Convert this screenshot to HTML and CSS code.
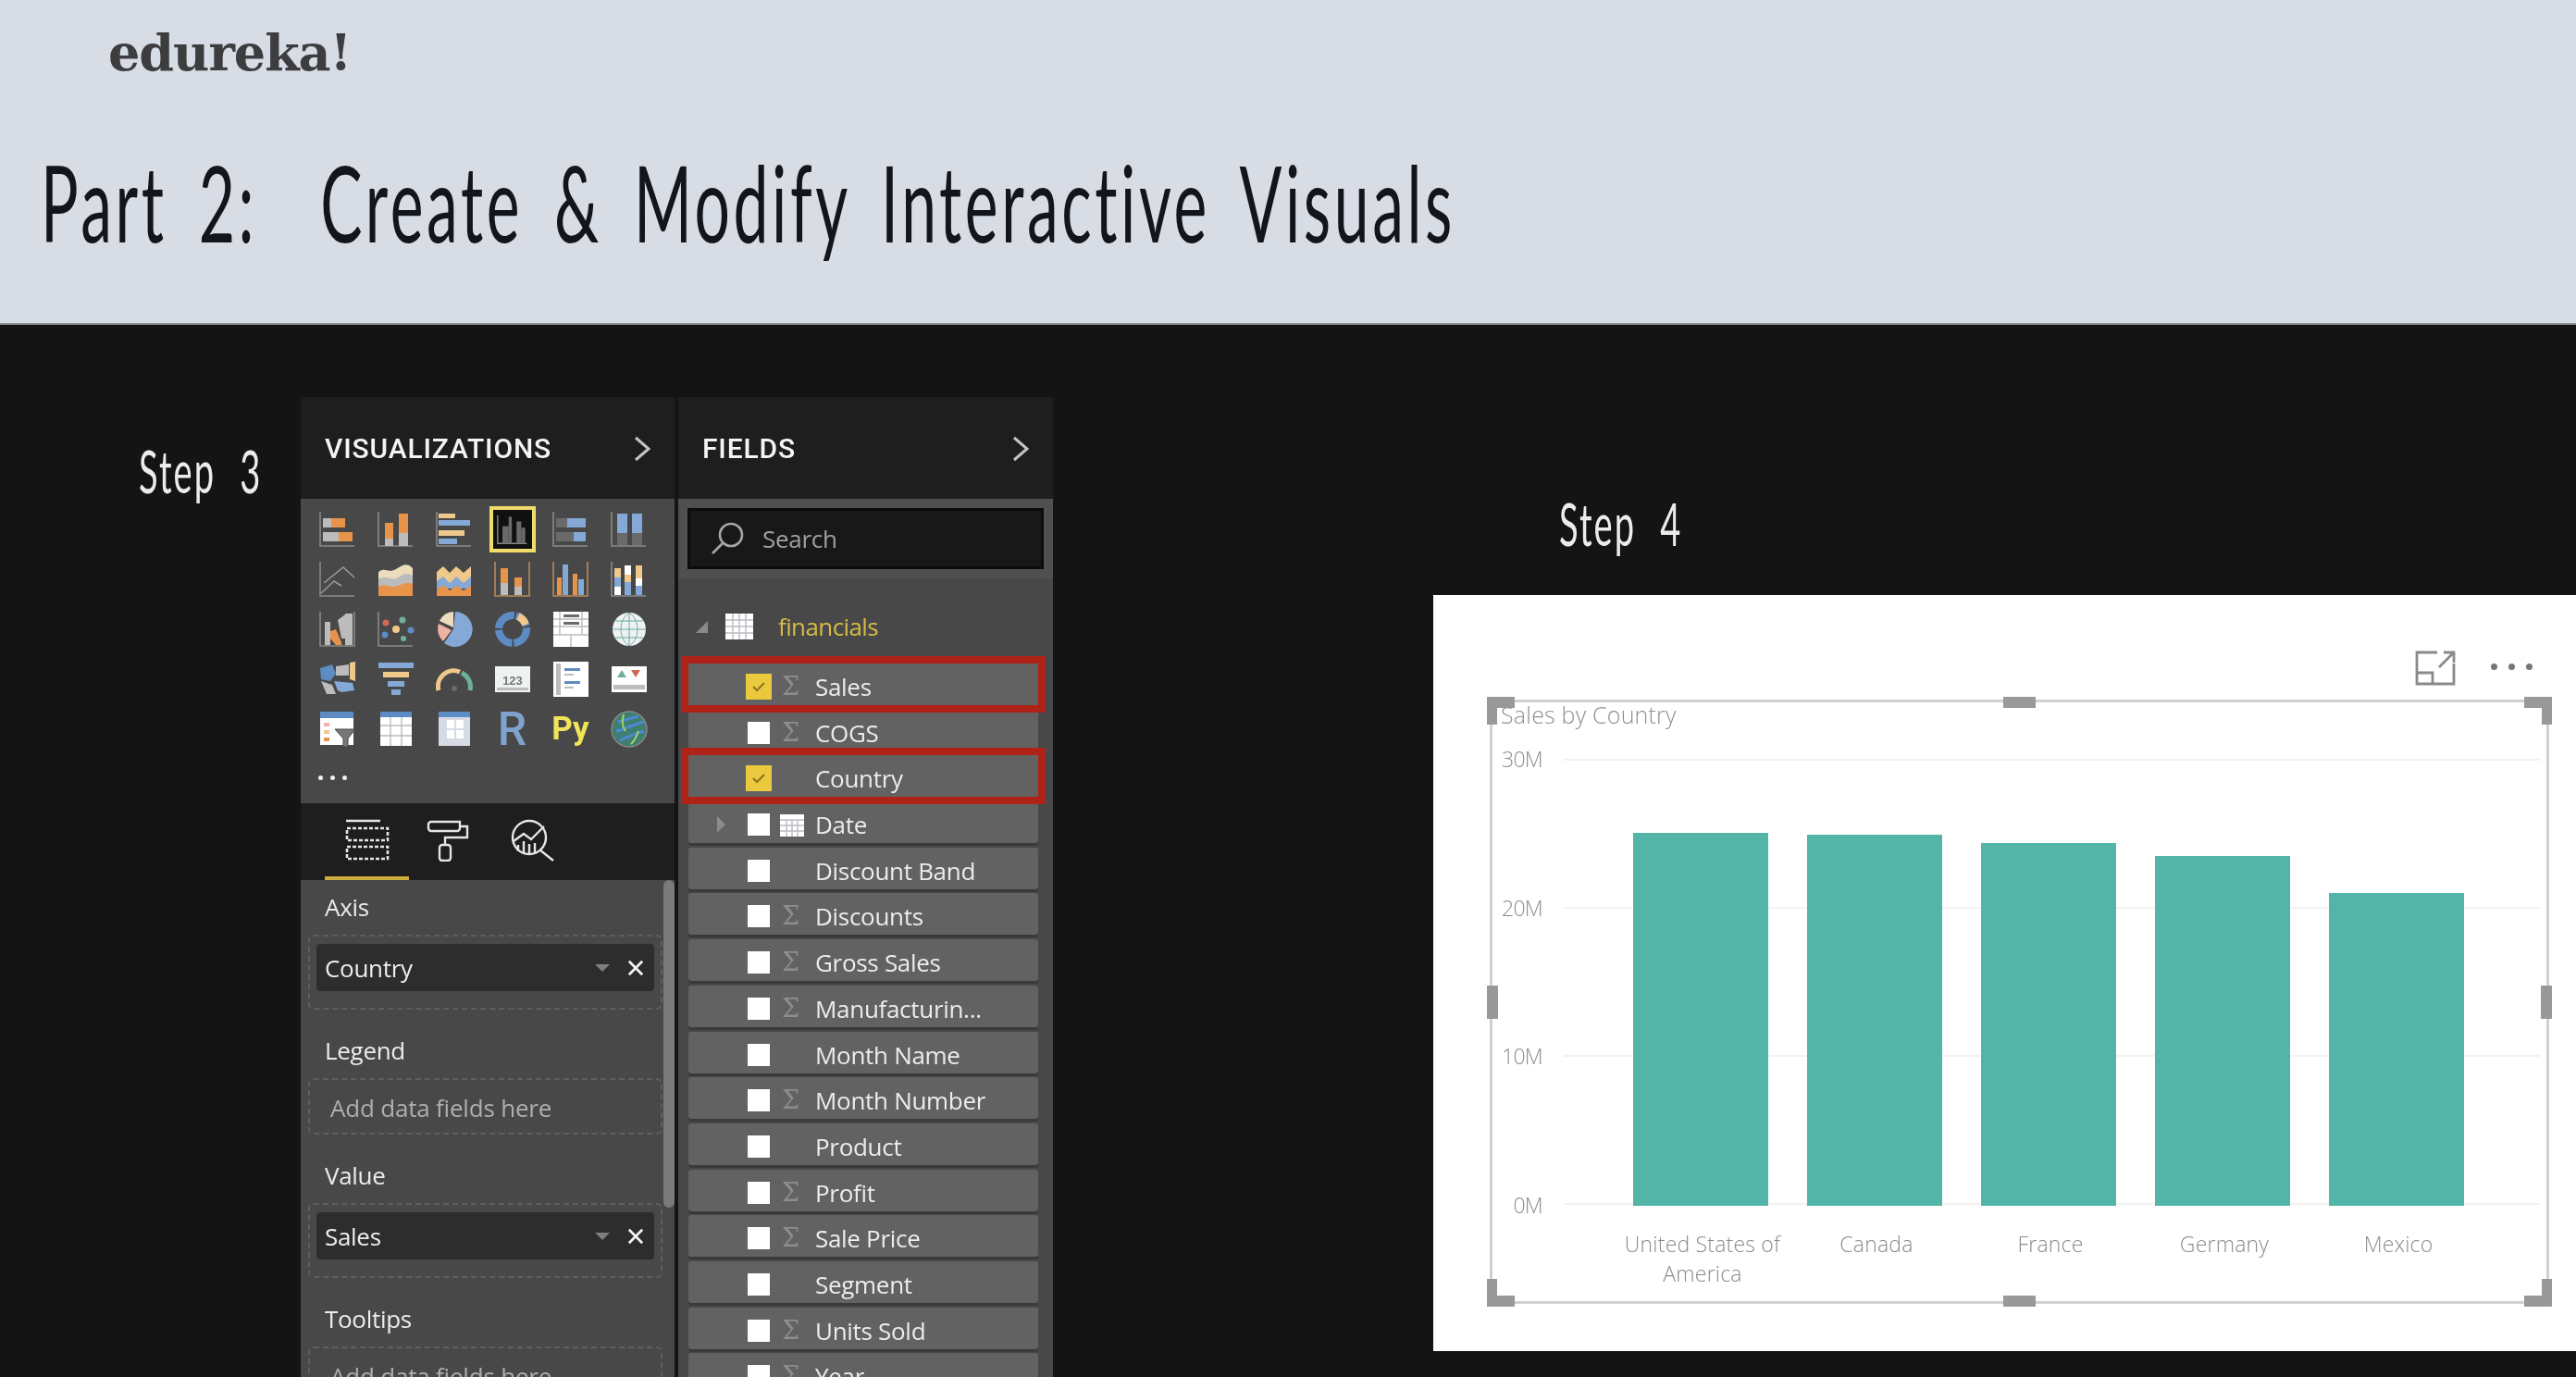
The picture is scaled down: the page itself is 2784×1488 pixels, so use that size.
FILE: index.html
```html
<!DOCTYPE html>
<html lang="en">
<head>
<meta charset="utf-8">
<title>Part 2: Create &amp; Modify Interactive Visuals</title>
<link rel="stylesheet" href="styles.css">
</head>
<body>
<div class="shot">
<header class="banner">
  <div class="brand">edureka!</div>
  <h1 class="title"><span class="squeeze">Part 2:  Create &amp; Modify Interactive Visuals</span></h1>
</header>
<main class="stage">
  <div class="step step-three"><span class="squeeze">Step 3</span></div>
  <section class="panel viz">
    <div class="panel-head"><span>VISUALIZATIONS</span><svg class="chev" viewBox="0 0 18 28"><path d="M2 2L16 14L2 26"/></svg></div>
    <div class="gallery">
      <svg class="vi" viewBox="0 0 40 40"><path class="ax" d="M1 1V38H38"/><rect class="g" x="4" y="8" width="9" height="10"/><rect class="o" x="13" y="8" width="15" height="10"/><rect class="g" x="4" y="23" width="17" height="10"/><rect class="o" x="21" y="23" width="15" height="10"/></svg>
      <svg class="vi" viewBox="0 0 40 40"><path class="ax" d="M1 1V38H38"/><rect class="g" x="8" y="30" width="9" height="8"/><rect class="o" x="8" y="13" width="9" height="17"/><rect class="g" x="23" y="24" width="10" height="14"/><rect class="o" x="23" y="3" width="10" height="21"/></svg>
      <svg class="vi" viewBox="0 0 40 40"><path class="ax" d="M1 1V38H38"/><rect class="t" x="3" y="3" width="18" height="5"/><rect class="b" x="3" y="10" width="34" height="6"/><rect class="t" x="3" y="21" width="28" height="6"/><rect class="b" x="3" y="30" width="20" height="6"/></svg>
      <div class="vi-selected"><svg class="vi-small" viewBox="0 0 40 40"><path class="ax" d="M1 2V38H38"/><rect class="dk" x="7" y="16" width="8" height="22"/><rect class="dk" x="15" y="4" width="4" height="34"/><rect class="dk" x="25" y="10" width="6" height="28"/><rect class="dk" x="31" y="18" width="5" height="20"/></svg></div>
      <svg class="vi" viewBox="0 0 40 40"><path class="ax" d="M1 1V38H38"/><rect class="dk" x="4" y="8" width="12" height="10"/><rect class="b" x="16" y="8" width="20" height="10"/><rect class="dk" x="4" y="23" width="19" height="10"/><rect class="b" x="23" y="23" width="13" height="10"/></svg>
      <svg class="vi" viewBox="0 0 40 40"><path class="ax" d="M1 1V38H38"/><rect class="b" x="7" y="3" width="11" height="21"/><rect class="dk" x="7" y="24" width="11" height="13"/><rect class="b" x="23" y="3" width="11" height="21"/><rect class="dk" x="23" y="24" width="11" height="13"/></svg>

      <svg class="vi" viewBox="0 0 40 40"><path class="ax" d="M1 1V38H38"/><path class="ln" d="M2 35L16 22L24 27M5 24L26 7L38 18"/></svg>
      <svg class="vi" viewBox="0 0 40 40"><path class="pale" d="M1 12C8 6 12 14 20 9S32 2 38 8V38H1Z"/><path class="g" d="M1 20C10 14 14 23 22 18S32 13 38 16V38H1Z"/><path class="o" d="M1 28C10 24 14 30 22 27S32 23 38 25V38H1Z"/></svg>
      <svg class="vi" viewBox="0 0 40 40"><path class="t" d="M1 12L8 6L15 13L22 6L30 13L38 6V24H1Z"/><path class="b" d="M1 22L8 17L15 24L22 17L30 24L38 17V30H1Z"/><path class="o" d="M1 31L8 26L15 32L22 27L30 32L38 27V38H1Z"/></svg>
      <svg class="vi" viewBox="0 0 40 40"><path class="axo" d="M1 1V38H38V1"/><rect class="o" x="7" y="8" width="8" height="16"/><rect class="g" x="7" y="24" width="8" height="13"/><rect class="o" x="22" y="18" width="8" height="10"/><rect class="g" x="22" y="28" width="8" height="9"/></svg>
      <svg class="vi" viewBox="0 0 40 40"><path class="axo" d="M1 1V38H38V1"/><rect class="o" x="5" y="18" width="5" height="19"/><rect class="b" x="11" y="4" width="6" height="33"/><rect class="o" x="22" y="14" width="5" height="23"/><rect class="b" x="28" y="20" width="6" height="17"/></svg>
      <svg class="vi" viewBox="0 0 40 40"><path class="ax" d="M1 1V38H38"/><rect class="t" x="4" y="8" width="7" height="10"/><rect class="b" x="4" y="18" width="7" height="10"/><rect class="w" x="4" y="28" width="7" height="9"/><rect class="w" x="15" y="5" width="7" height="10"/><rect class="t" x="15" y="15" width="7" height="8"/><rect class="b" x="15" y="23" width="7" height="14"/><rect class="t" x="27" y="5" width="7" height="14"/><rect class="w" x="27" y="19" width="7" height="8"/><rect class="b" x="27" y="27" width="7" height="10"/></svg>

      <svg class="vi" viewBox="0 0 40 40"><path class="ax" d="M1 1V38H38V1"/><rect class="g" x="6" y="12" width="6" height="25"/><rect class="g" x="28" y="3" width="8" height="34"/><path class="o" d="M12 22L18 20L24 34V37H18L12 30Z"/><path class="g" d="M20 10L28 4V30L24 30Z"/></svg>
      <svg class="vi" viewBox="0 0 40 40"><path class="ax" d="M1 1V38H38"/><circle class="rd" cx="9" cy="13" r="3.5"/><circle class="gn" cx="27" cy="10" r="3.5"/><circle class="t" cx="20" cy="20" r="4"/><circle class="bd" cx="8" cy="26" r="3.5"/><circle class="bd" cx="36" cy="21" r="3.5"/><circle class="gn" cx="28" cy="30" r="3"/></svg>
      <svg class="vi" viewBox="0 0 40 40"><path class="b" d="M21 1A19 19 0 1 1 9 35L19 20Z"/><path class="pale" d="M19 1V18L4 11A18 18 0 0 1 19 1Z"/><path class="pk" d="M3 14L17 21L8 33A18 18 0 0 1 3 14Z"/></svg>
      <svg class="vi" viewBox="0 0 40 40"><circle class="ring" cx="20" cy="20" r="15" stroke-dasharray="22 2 22 2 24 2 16 2"/><path class="tring" d="M26 6A15 15 0 0 1 34 15"/></svg>
      <svg class="vi" viewBox="0 0 40 40"><rect class="w" x="1" y="1" width="38" height="38"/><path class="tb" d="M1 26H39M20 26V39M1 9H39M1 17H39M8 1V26M32 1V26"/><rect class="dk" x="12" y="4" width="17" height="3"/><rect class="dk" x="12" y="12" width="17" height="3"/></svg>
      <svg class="vi" viewBox="0 0 40 40"><circle class="pw" cx="20" cy="20" r="18"/><path class="gl" d="M2 20H38M5 11H35M5 29H35M20 2V38M20 2C8 10 8 30 20 38M20 2C32 10 32 30 20 38"/></svg>

      <svg class="vi" viewBox="0 0 40 40"><path class="bd" d="M1 8L14 4L18 14L12 22L2 20Z"/><path class="g" d="M18 6L32 4L32 16L18 16Z"/><path class="t" d="M33 2L39 1V22L33 20Z"/><path class="g" d="M2 22L14 26L18 36L8 36Z"/><path class="b" d="M16 22L36 24L38 32L24 34L20 32Z"/></svg>
      <svg class="vi" viewBox="0 0 40 40"><rect class="b" x="1" y="2" width="38" height="6"/><rect class="t" x="6" y="12" width="28" height="6"/><rect class="b" x="11" y="22" width="18" height="6"/><rect class="b" x="15" y="31" width="10" height="6"/></svg>
      <svg class="vi" viewBox="0 0 40 40"><path class="gt" d="M3 32A17 17 0 0 1 26 12"/><path class="gg" d="M28 13A17 17 0 0 1 37 32"/><circle class="dk" cx="20" cy="30" r="3"/></svg>
      <svg class="vi" viewBox="0 0 40 40"><rect class="pw" x="1" y="6" width="38" height="28"/><text class="num" x="20" y="26">123</text><rect class="g" x="3" y="29" width="34" height="3"/></svg>
      <svg class="vi" viewBox="0 0 40 40"><rect class="w" x="1" y="1" width="38" height="38"/><rect class="g" x="4" y="3" width="5" height="34"/><rect class="bd" x="13" y="8" width="17" height="3"/><rect class="g" x="13" y="14" width="10" height="2"/><rect class="bd" x="13" y="22" width="17" height="3"/><rect class="g" x="13" y="28" width="10" height="2"/></svg>
      <svg class="vi" viewBox="0 0 40 40"><rect class="w" x="1" y="6" width="38" height="28"/><path class="gn" d="M12 10L17 18H7Z"/><path class="rd" d="M22 10H32L27 18Z"/><rect class="g" x="3" y="26" width="34" height="5"/></svg>

      <svg class="vi" viewBox="0 0 40 40"><rect class="w" x="1" y="1" width="36" height="36"/><rect class="bd" x="1" y="1" width="36" height="7"/><rect class="pk" x="5" y="13" width="6" height="4"/><rect class="t" x="5" y="21" width="6" height="4"/><rect class="o" x="5" y="29" width="6" height="4"/><path class="fn" d="M17 20H39L31 30V39H26V30Z"/></svg>
      <svg class="vi" viewBox="0 0 40 40"><rect class="w" x="3" y="1" width="34" height="37"/><rect class="bd" x="3" y="1" width="34" height="6"/><path class="tb" d="M3 16H37M3 27H37M14 7V38M26 7V38"/></svg>
      <svg class="vi" viewBox="0 0 40 40"><rect class="pl" x="3" y="1" width="34" height="37"/><rect class="bd" x="3" y="1" width="34" height="6"/><rect class="w" x="12" y="10" width="8" height="9"/><rect class="w" x="22" y="10" width="8" height="9"/><rect class="w" x="12" y="21" width="8" height="9"/><rect class="w" x="22" y="21" width="8" height="9"/></svg>
      <span class="vi-r">R</span>
      <span class="vi-py">Py</span>
      <svg class="vi" viewBox="0 0 40 40"><circle class="gb" cx="20" cy="20" r="19"/><path class="bs" d="M8 12C16 10 22 8 30 6M6 22C16 20 26 14 36 12M10 32C20 28 28 24 36 22"/><path class="gs" d="M14 4C12 12 12 16 16 22M30 22C28 28 26 32 22 36"/></svg>
      <div class="more"><i></i><i></i><i></i></div>
    </div>
    <div class="tabs">
      <div class="tab tab-active"><svg class="tab-icon" viewBox="0 0 48 46"><path class="tabl" d="M1 2H38"/><rect class="tabd" x="2" y="10" width="44" height="13"/><rect class="tabd" x="2" y="30" width="44" height="13"/></svg></div>
      <div class="tab"><svg class="tab-icon" viewBox="0 0 46 46"><path class="tabl" d="M36 8H44V20H20V28M36 3H5A3 3 0 0 0 2 6V10A3 3 0 0 0 5 13H33A3 3 0 0 0 36 10Z"/><rect class="tabl" x="14" y="28" width="12" height="17" rx="3"/></svg></div>
      <div class="tab"><svg class="tab-icon" viewBox="0 0 48 46"><circle class="tabl" cx="20" cy="20" r="18"/><path class="tabl" d="M31 33L46 45M3 24L14 16L22 22L36 8M8 28V35M14 24V38M20 27V38M26 26V36"/></svg></div>
    </div>
    <div class="wells">
      <div class="well-label">Axis</div>
      <div class="well"><div class="pill"><span class="pill-name">Country</span><i class="caret"></i><svg class="pill-x" viewBox="0 0 20 20"><path d="M2 2L18 18M18 2L2 18"/></svg></div></div>
      <div class="well-label">Legend</div>
      <div class="well well-empty">Add data fields here</div>
      <div class="well-label">Value</div>
      <div class="well"><div class="pill"><span class="pill-name">Sales</span><i class="caret"></i><svg class="pill-x" viewBox="0 0 20 20"><path d="M2 2L18 18M18 2L2 18"/></svg></div></div>
      <div class="well-label">Tooltips</div>
      <div class="well well-empty">Add data fields here</div>
      <div class="scrollbar"></div>
    </div>
  </section>
  <section class="panel fields">
    <div class="panel-head"><span>FIELDS</span><svg class="chev" viewBox="0 0 18 28"><path d="M2 2L16 14L2 26"/></svg></div>
    <div class="search-wrap">
      <div class="search"><svg class="search-icon" viewBox="0 0 36 36"><circle cx="22" cy="14" r="12"/><path d="M13 23L2 34"/></svg><span>Search</span></div>
    </div>
    <div class="tree">
      <div class="table-row"><i class="corner"></i><svg class="table-icon" viewBox="0 0 30 28"><rect class="w" width="30" height="28"/><path class="tb" d="M0 7H30M0 14H30M0 21H30M8 0V28M15 0V28M22 0V28"/></svg><span class="table-name">financials</span></div>
      <div class="row row-hit"><span></span><i class="check check-on"><svg viewBox="0 0 16 12"><path d="M2 6L6 10L14 2"/></svg></i><span class="sigma">Σ</span><span class="name">Sales</span></div>
      <div class="row"><span></span><i class="check"></i><span class="sigma">Σ</span><span class="name">COGS</span></div>
      <div class="row row-hit"><span></span><i class="check check-on"><svg viewBox="0 0 16 12"><path d="M2 6L6 10L14 2"/></svg></i><span></span><span class="name">Country</span></div>
      <div class="row"><i class="expander"></i><i class="check"></i><svg class="date-icon" viewBox="0 0 26 26"><rect class="w" y="2" width="26" height="24"/><path class="tb" d="M0 8H26M0 14H26M0 20H26M7 8V26M13 8V26M19 8V26"/></svg><span class="name">Date</span></div>
      <div class="row"><span></span><i class="check"></i><span></span><span class="name">Discount Band</span></div>
      <div class="row"><span></span><i class="check"></i><span class="sigma">Σ</span><span class="name">Discounts</span></div>
      <div class="row"><span></span><i class="check"></i><span class="sigma">Σ</span><span class="name">Gross Sales</span></div>
      <div class="row"><span></span><i class="check"></i><span class="sigma">Σ</span><span class="name">Manufacturin...</span></div>
      <div class="row"><span></span><i class="check"></i><span></span><span class="name">Month Name</span></div>
      <div class="row"><span></span><i class="check"></i><span class="sigma">Σ</span><span class="name">Month Number</span></div>
      <div class="row"><span></span><i class="check"></i><span></span><span class="name">Product</span></div>
      <div class="row"><span></span><i class="check"></i><span class="sigma">Σ</span><span class="name">Profit</span></div>
      <div class="row"><span></span><i class="check"></i><span class="sigma">Σ</span><span class="name">Sale Price</span></div>
      <div class="row"><span></span><i class="check"></i><span></span><span class="name">Segment</span></div>
      <div class="row"><span></span><i class="check"></i><span class="sigma">Σ</span><span class="name">Units Sold</span></div>
      <div class="row"><span></span><i class="check"></i><span class="sigma">Σ</span><span class="name">Year</span></div>
    </div>
  </section>
  <section class="result">
    <div class="step step-four"><span class="squeeze">Step 4</span></div>
    <div class="card">
      <div class="card-actions">
        <svg class="focus-icon" viewBox="0 0 44 38"><path d="M24 2H2V36H42V14M2 24H19V36M26 18L42 2M31 2H42V13"/></svg>
        <div class="card-dots"><i></i><i></i><i></i></div>
      </div>
      <div class="frame">
        <i class="grip grip-tl"></i><i class="grip grip-tr"></i><i class="grip grip-bl"></i><i class="grip grip-br"></i>
        <i class="nub nub-t"></i><i class="nub nub-b"></i><i class="nub nub-l"></i><i class="nub nub-r"></i>
        <div class="chart-title">Sales by Country</div>
        <div class="chart">
          <div class="y-axis"><span>30M</span><span>20M</span><span>10M</span><span>0M</span></div>
          <div class="plot">
            <div class="gridlines"><i></i><i></i><i></i><i></i></div>
            <div class="bars">
              <div class="bar" style="height:403px"></div>
              <div class="bar" style="height:401px"></div>
              <div class="bar" style="height:392px"></div>
              <div class="bar" style="height:378px"></div>
              <div class="bar" style="height:338px"></div>
            </div>
          </div>
        </div>
        <div class="x-axis"><span>United States of America</span><span>Canada</span><span>France</span><span>Germany</span><span>Mexico</span></div>
      </div>
    </div>
  </section>
</main>
</div>
</body>
</html>
```
FILE: styles.css
```css
* { box-sizing: border-box; }
html, body { margin: 0; background: #141414; }
body { width: 2784px; height: 1488px; overflow: hidden; font-family: "Open Sans", "Liberation Sans", sans-serif; }
.shot { width: 2784px; height: 1488px; overflow: hidden; filter: blur(0.7px); }

.banner { height: 351px; background: #d8dce5; padding-top: 25px; border-bottom: 2px solid #8d8f93; }
.brand { margin-left: 117px; font: 700 54px/64px "DejaVu Serif", serif; color: #3d3d40; letter-spacing: -1px; }
.title { margin: 69px 0 0 44px; font: 400 114px/120px Lato, sans-serif; color: #14151a; white-space: pre; letter-spacing: 6px; word-spacing: 22px; }
.squeeze { display: inline-block; white-space: pre; font-variant-ligatures: none; transform: scaleX(0.595); transform-origin: left center; }

.stage { display: flex; height: 1137px; padding-top: 78px; background: #141414; }
.step { font: 400 64px/72px Lato, sans-serif; color: #ececec; white-space: pre; letter-spacing: 3.5px; word-spacing: 24px; }
.step-three { width: 325px; padding: 44px 0 0 150px; flex: none; }

.panel { flex: none; height: 1059px; overflow: hidden; position: relative; background: #484848; }
.viz { width: 404px; }
.fields { width: 405px; margin-left: 4px; }
.panel-head { height: 110px; background: #1e1e1e; display: flex; align-items: center; justify-content: space-between; padding: 2px 26px 0 26px; font: 500 30px/32px Roboto, sans-serif; letter-spacing: 0.85px; color: #f4f4f4; }
.chev { width: 18px; height: 28px; }
.chev path { fill: none; stroke: #c4c4c4; stroke-width: 3; }

.gallery { height: 329px; background: #484848; display: grid; grid-template-columns: repeat(6, 63px); grid-auto-rows: 54px; padding: 6px 0 0 8px; justify-items: center; align-items: center; }
.vi { width: 40px; height: 40px; }
.vi-selected { width: 50px; height: 50px; border: 4px solid #f0dc6a; background: #101010; display: flex; align-items: center; justify-content: center; }
.vi-small { width: 34px; height: 34px; }
.vi-r { font: 500 50px/54px Roboto, sans-serif; color: #7fa3cf; }
.vi-py { font: 700 35px/48px Roboto, sans-serif; color: #f1e45a; }
.more { display: flex; gap: 8px; justify-self: start; padding-left: 11px; margin-top: -4px; }
.more i { width: 5px; height: 5px; background: #f2f2f2; border-radius: 50%; }
.o { fill: #e8934a; } .g { fill: #bcbcbc; } .b { fill: #85a9d6; } .t { fill: #efc98b; } .w { fill: #fff; }
.dk { fill: #6a6a6a; } .pale { fill: #ecdcbc; } .pk { fill: #eeb3a4; } .rd { fill: #d06a55; } .gn { fill: #6fb09a; }
.bd { fill: #5d8cc4; } .pw { fill: #eef2f2; } .pl { fill: #d7dbe6; } .fn { fill: #777; stroke: #484848; stroke-width: 1; }
.gb { fill: #3f7f70; stroke: #888; stroke-width: 1.5; }
.ax { fill: none; stroke: #8a8a8a; stroke-width: 1.6; }
.axo { fill: none; stroke: #b78a5c; stroke-width: 1.6; }
.ln { fill: none; stroke: #999; stroke-width: 1.6; }
.tb { fill: none; stroke: #b9bcc4; stroke-width: 1.4; }
.gl { fill: none; stroke: #6fa8a0; stroke-width: 1; }
.ring { fill: none; stroke: #5d8cc4; stroke-width: 8; }
.tring { fill: none; stroke: #efc98b; stroke-width: 8; }
.gt { fill: none; stroke: #efc98b; stroke-width: 5; }
.gg { fill: none; stroke: #6fb09a; stroke-width: 5; }
.bs { fill: none; stroke: #4f87d0; stroke-width: 3; }
.gs { fill: none; stroke: #a8d46a; stroke-width: 2; }
.num { font: 700 13px "Liberation Sans", sans-serif; fill: #777; text-anchor: middle; }

.tabs { height: 83px; background: #1e1e1e; display: flex; padding-left: 26px; position: relative; }
.tab { width: 91px; height: 83px; padding-top: 17px; display: flex; justify-content: center; border-bottom: 4px solid transparent; }
.tab-active { border-bottom-color: #cdae3c; }
.tab:nth-child(2) { width: 90px; padding-right: 6px; }
.tab:nth-child(3) { width: 88px; padding-right: 0; }
.tab-icon { width: 48px; height: 46px; }
.tabl { fill: none; stroke: #e6e6e6; stroke-width: 2.4; }
.tabd { fill: none; stroke: #e6e6e6; stroke-width: 2.6; stroke-dasharray: 4 2; }

.wells { position: relative; height: 537px; padding: 11px 0 0 8px; background: #484848; }
.well-label { height: 36px; line-height: 36px; font-size: 26px; letter-spacing: -0.3px; color: #ececec; margin: 0 0 12px 18px; }
.well { width: 383px; height: 81px; margin-bottom: 26px; padding: 8px 7px; border: 2px dashed #5e5e5e; border-radius: 6px; }
.well-empty { height: 61px; padding: 0 0 0 22px; line-height: 60px; font-size: 26px; letter-spacing: -0.2px; color: #aeaeae; }
.pill { height: 51px; background: #2d2d2d; border-radius: 4px; display: flex; align-items: center; padding: 0 11px 0 9px; font-size: 26px; letter-spacing: -0.3px; color: #ededed; }
.pill-name { flex: 1; }
.caret { width: 0; height: 0; border: 8px solid transparent; border-top: 8px solid #7e7e7e; border-bottom: 0; margin-right: 19px; }
.pill-x { width: 18px; height: 18px; }
.pill-x path { fill: none; stroke: #f4f4f4; stroke-width: 3; }
.scrollbar { position: absolute; top: 0; right: 0; width: 12px; height: 354px; background: #7a7a7a; border-radius: 6px; }

.search-wrap { height: 86px; padding: 10px 10px 0 10px; background: #505050; }
.search { height: 66px; background: #181818; border: 3px solid #0c0c0c; display: flex; align-items: center; padding-left: 22px; gap: 20px; font-size: 26px; color: #a0a0a0; letter-spacing: -0.3px; }
.search-icon { width: 36px; height: 36px; }
.search-icon * { fill: none; stroke: #a6a6a6; stroke-width: 2.6; }

.tree { padding: 0 0 0 11px; }
.table-row { height: 92px; display: flex; align-items: center; padding: 12px 0 0 11px; margin-left: -11px; }
.corner { width: 0; height: 0; margin-left: 8px; border-style: solid; border-width: 0 0 13px 13px; border-color: transparent transparent #8a8a8a transparent; }
.table-icon { width: 30px; height: 28px; margin-left: 19px; }
.table-name { margin-left: 27px; font-size: 26px; letter-spacing: -0.6px; color: #d6bb45; }
.row { position: relative; width: 378px; height: 45px; padding-top: 5px; margin-bottom: 4.7px; background: #626262; border-radius: 3px; box-shadow: 0 3px 0 #3a3a3a; display: grid; grid-template-columns: 64px 37px 36px 1fr; align-items: center; }
.row-hit { outline: 8px solid #ae2218; outline-offset: 0; z-index: 1; box-shadow: none; border-radius: 0; }
.check { width: 24px; height: 24px; background: #fff; display: block; }
.check-on { width: 28px; height: 28px; margin-left: -2px; background: #eac93e; display: flex; align-items: center; justify-content: center; }
.check-on svg { width: 16px; height: 12px; }
.check-on path { fill: none; stroke: #8a7220; stroke-width: 2; }
.sigma { font: 400 27px/40px "DejaVu Serif", serif; color: #8e8e8e; }
.name { font-size: 26px; letter-spacing: -0.3px; color: #ececec; white-space: nowrap; }
.expander { width: 0; height: 0; margin-left: 31px; border-style: solid; border-width: 9px 0 9px 9px; border-color: transparent transparent transparent #8c8c8c; }
.date-icon { width: 26px; height: 26px; margin-left: -2px; }

.result { flex: 1; margin-left: 411px; min-width: 0; }
.step-four { padding: 101px 0 0 136px; height: 214px; }
.card { height: 817px; background: #fff; padding: 61px 0 0 61px; }
.card-actions { height: 36px; margin: 0 47px 16px 0; display: flex; justify-content: flex-end; align-items: center; gap: 38px; }
.focus-icon { width: 44px; height: 38px; }
.focus-icon path { fill: none; stroke: #8a8a8a; stroke-width: 2.8; }
.card-dots { display: flex; gap: 12px; padding-bottom: 4px; }
.card-dots i { width: 7px; height: 7px; background: #777; border-radius: 50%; }
.frame { position: relative; width: 1145px; height: 653px; border: 3px solid #d0d0d0; }
.grip { position: absolute; width: 30px; height: 30px; border: solid #999; border-width: 0; }
.grip-tl { left: -6px; top: -6px; border-width: 12px 0 0 11px; }
.grip-tr { right: -6px; top: -6px; border-width: 12px 11px 0 0; }
.grip-bl { left: -6px; bottom: -6px; border-width: 0 0 12px 11px; }
.grip-br { right: -6px; bottom: -6px; border-width: 0 11px 12px 0; }
.nub { position: absolute; background: #999; }
.nub-t { left: 552px; top: -6px; width: 35px; height: 12px; }
.nub-b { left: 552px; bottom: -6px; width: 35px; height: 12px; }
.nub-l { left: -6px; top: 306px; width: 12px; height: 36px; }
.nub-r { right: -6px; top: 306px; width: 12px; height: 36px; }
.chart-title { margin: 0 0 0 9px; height: 26px; line-height: 26px; font-size: 25px; font-weight: 300; letter-spacing: 0.2px; color: #8f8f98; }
.chart { display: flex; margin-top: 35px; }
.y-axis { width: 54px; height: 482px; display: flex; flex-direction: column; justify-content: space-between; align-items: flex-end; font-size: 23px; font-weight: 300; letter-spacing: -0.7px; color: #8c8c8c; }
.y-axis span { height: 0; line-height: 0; }
.plot { position: relative; width: 1055px; height: 482px; margin-left: 23px; }
.gridlines { position: absolute; inset: 0; display: flex; flex-direction: column; justify-content: space-between; }
.gridlines i { height: 2px; background: #f3f2f2; }
.bars { position: relative; height: 483px; padding-left: 75px; display: flex; align-items: flex-end; gap: 42px; }
.bar { width: 146px; background: #52b5a7; }
.x-axis { display: flex; margin: 26px 0 0 133px; font-size: 23px; font-weight: 300; line-height: 32px; letter-spacing: 0.2px; color: #8c8c8c; text-align: center; }
.x-axis span { width: 188px; flex: none; padding: 0 2px; }
```
